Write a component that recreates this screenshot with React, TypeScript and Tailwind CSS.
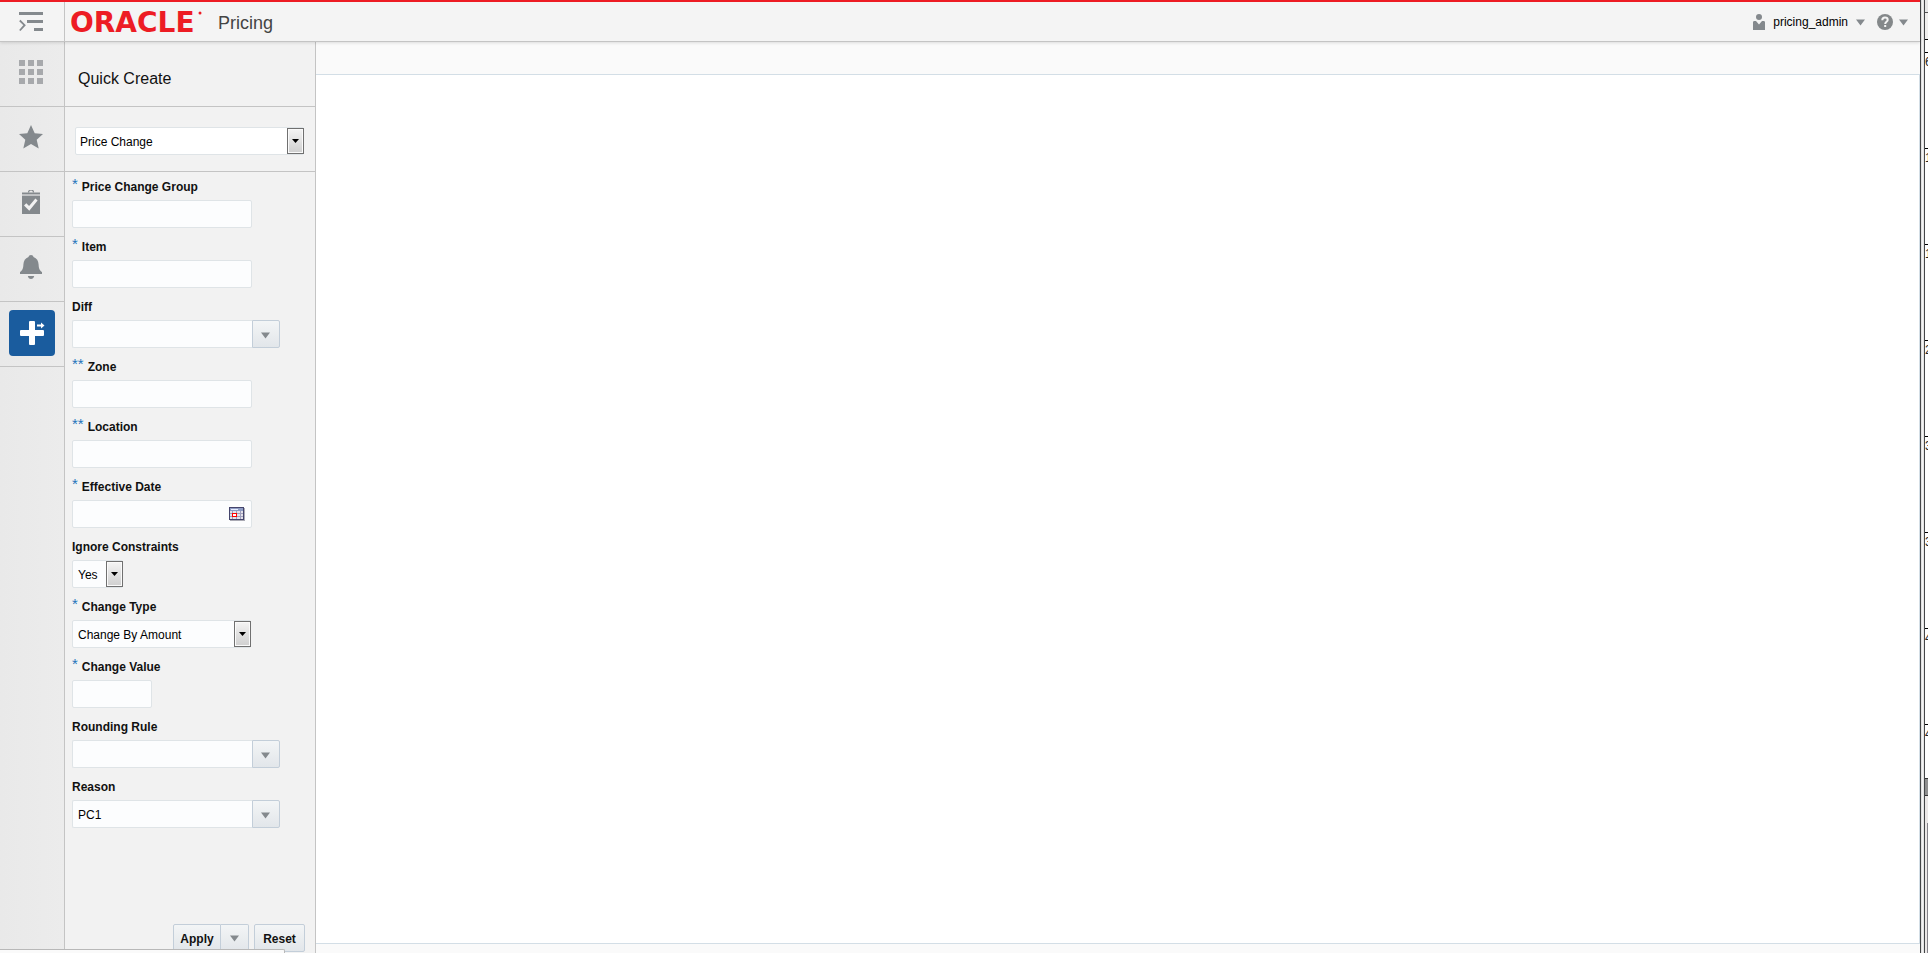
import type { ReactNode } from "react";

const railItems = [
  {
    label: "Tasks",
    icon: (
      <svg width="24" height="24" viewBox="0 0 24 24" fill="#a7a9ac">
        {[0, 9, 18].map((y) => [0, 9, 18].map((x) => <rect key={`${x}-${y}`} x={x} y={y} width="6" height="6" />))}
      </svg>
    ),
  },
  {
    label: "Favorites",
    icon: (
      <svg width="24" height="24" viewBox="0 0 24 24" fill="#84898d">
        <path d="M12 0l3.700 8.200 8.300.8-6.300 5.800 2 8.700L12 19l-7.700 4.500 2-8.700L0 9l8.300-.8z" />
      </svg>
    ),
  },
  {
    label: "Open Tasks",
    icon: (
      <svg width="24" height="24" viewBox="0 0 24 24">
        <path d="M9.500 2.500a2.500 2.500 0 0 1 5 0" fill="none" stroke="#84898d" strokeWidth="1.200" />
        <path d="M3 2.500h18v2H3zM3 6h18v18H3z" fill="#84898d" />
        <path d="M3 4.500h18V6H3z" fill="#c2c4c6" />
        <path d="M5 15.500l2.300-2.200 2.800 2.600 6.300-7.400 2.200 2-8.300 10.300z" fill="#f2f2f2" />
      </svg>
    ),
  },
  {
    label: "Notifications",
    icon: (
      <svg width="24" height="24" viewBox="0 0 24 24" fill="#84898d">
        <path d="M12 0c1.300 0 2.300.8 2.500 1.900 3.300 1.100 4.900 4 5.100 7.600.2 4.300 1 6 3.400 7.600V19H1v-1.900c2.400-1.600 3.200-3.300 3.400-7.600.2-3.600 1.800-6.500 5.100-7.600C9.700.8 10.700 0 12 0zM8.800 21h6.400c-.4 1.800-1.600 3-3.200 3s-2.800-1.200-3.200-3z" />
      </svg>
    ),
  },
  {
    label: "Quick Create",
    active: true,
    icon: (
      <svg width="46" height="46" viewBox="0 0 46 46" fill="#fff">
        <rect x="20" y="11" width="6" height="24" rx="1" />
        <rect x="11" y="20" width="24" height="6" rx="1" />
        <path d="M28 14.500h4V12.500l3.500 3-3.500 3v-2h-4z" />
      </svg>
    ),
  },
];

// marks the rows of the neighbouring window that peeks in on the right
const rulerMarks = ["6", "1", "1", "2", "3", "3", "4", "4"];

function DownArrow() {
  return (
    <svg width="9" height="7" viewBox="0 0 9 7" fill="#84898d" aria-hidden="true">
      <path d="M0 0.500h9L4.500 6.500z" />
    </svg>
  );
}

function SelectBox({ id, label, options, className, wide }: {
  id: string;
  label?: string;
  options: string[];
  className: string;
  wide?: boolean;
}) {
  return (
    <div className={`relative h-7 ${className}`}>
      <select
        id={id}
        aria-label={label}
        className={`h-7 w-full appearance-none rounded-xs border border-[#dfe4e7] pt-px text-[12px] text-black ${wide ? "bg-white pl-1" : "bg-[#fcfdfe] pl-[5px]"}`}
      >
        {options.map((o) => (
          <option key={o}>{o}</option>
        ))}
      </select>
      <span className="pointer-events-none absolute right-0 top-px flex h-[26px] w-[17px] items-center justify-center border border-[#707070] bg-linear-to-b from-[#f4f4f4] to-[#cfcfcf] shadow-[inset_0_0_0_1px_#fafafa]">
        <svg width="7" height="4" viewBox="0 0 7 4" aria-hidden="true">
          <path d="M0 0h7L3.500 4z" />
        </svg>
      </span>
    </div>
  );
}

function Field({ id, label, mark, children }: { id: string; label: string; mark?: string; children: ReactNode }) {
  return (
    <div className="h-[60px]">
      <label htmlFor={id} className="flex h-7 items-center gap-1 pt-0.5 text-[12px] font-bold text-[#111]">
        {mark && <span className="self-start text-[15px] font-normal leading-5 text-[#2474bb]">{mark}</span>}
        {label}
      </label>
      {children}
    </div>
  );
}

function TextBox({ id, className }: { id: string; className: string }) {
  return (
    <input
      id={id}
      type="text"
      className={`block h-7 rounded-xs border border-[#dfe4e7] bg-[#fcfdfe] px-[5px] text-[12px] ${className}`}
    />
  );
}

function ComboBox({ id, name, value }: { id: string; name: string; value?: string }) {
  return (
    <div className="flex">
      <input
        id={id}
        type="text"
        defaultValue={value}
        className="h-7 w-[180px] rounded-l-xs border border-r-0 border-[#dfe4e7] bg-[#fcfdfe] px-[5px] pt-px text-[12px]"
      />
      <button
        type="button"
        aria-label={`Show ${name} list`}
        className="flex h-7 w-7 items-center justify-center rounded-r-xs border border-[#c3ced9] bg-linear-to-b from-[#f3f5f6] to-[#e2e6ea] pr-0.5 pt-0.5"
      >
        <DownArrow />
      </button>
    </div>
  );
}

function Header() {
  return (
    <header className="relative z-10 flex h-[42px] shrink-0 items-stretch border-b border-t-2 border-b-[#c4c4c4] border-t-[#ed1c24] bg-[#f4f4f4] shadow-[0_1px_3px_rgba(0,0,0,0.12)]">
      <button type="button" aria-label="Expand navigation" className="flex w-[65px] items-center justify-center border-r border-[#c4c4c4] pr-0.5">
        <svg width="24" height="20" viewBox="0 0 24 20" fill="#84898d">
          <rect width="24" height="3" />
          <rect x="8" y="8" width="16" height="3" />
          <rect x="15" y="16" width="9" height="3" />
          <path d="M0.800 8.500L5.600 13.200L0.800 18.500" fill="none" stroke="#84898d" strokeWidth="1.800" />
        </svg>
      </button>
      <div className="flex w-[153px] items-center pl-1.5">
        <svg width="142" height="36" viewBox="0 0 142 36" role="img" aria-label="Oracle" fill="#ed1c24">
          <text x="-1" y="28" fontSize="28" className="font-['DejaVu_Sans',sans-serif] font-bold">ORACLE</text>
          <circle cx="129" cy="9" r="1.500" />
        </svg>
      </div>
      <h1 className="self-center pt-[3px] text-[18px] leading-6 text-[#444]">Pricing</h1>
      <div className="ml-auto flex items-center pr-3 pt-px">
        <button type="button" className="flex items-center gap-2 text-[12px] text-black">
          <svg width="12" height="16" viewBox="0 0 12 16" fill="#84898d" aria-hidden="true">
            <circle cx="6" cy="3" r="3" />
            <path d="M0 8.500C0 7.500.500 7 1.500 7H3l3 3.500L9 7h1.500c1 0 1.500.500 1.500 1.500V16H0z" />
          </svg>
          pricing_admin
          <DownArrow />
        </button>
        <button type="button" aria-label="Help" className="ml-3 flex items-center gap-[6px]">
          <svg width="16" height="16" viewBox="0 0 16 16" aria-hidden="true">
            <circle cx="8" cy="8" r="8" fill="#84888a" />
            <path d="M5.300 6.200C5.300 4.500 6.400 3.600 8 3.600s2.700.9 2.700 2.300c0 1.900-2.500 1.900-2.500 4" fill="none" stroke="#f4f4f4" strokeWidth="2" />
            <rect x="7.200" y="11" width="2" height="2" fill="#f4f4f4" />
          </svg>
          <DownArrow />
        </button>
      </div>
    </header>
  );
}

function Rail() {
  return (
    <nav className="w-[65px] shrink-0 border-r border-[#c4c4c4] bg-linear-to-r from-[#e9e9e9] to-[#ececec]">
      {railItems.map((item) => (
        <button
          key={item.label}
          type="button"
          aria-label={item.label}
          className="flex h-[65px] w-full items-center justify-center border-b border-[#c4c4c4] pb-0.5 pr-0.5"
        >
          <span className={item.active ? "ml-0.5 rounded-[4px] bg-[#1a5c9e]" : "pb-0.5"}>{item.icon}</span>
        </button>
      ))}
    </nav>
  );
}

function QuickCreate() {
  const buttonLook = "h-7 border border-[#c3ced9] bg-linear-to-b from-[#f3f5f6] to-[#e2e6ea] pt-px text-[12px] font-bold text-[#111]";

  return (
    <aside className="flex w-[251px] shrink-0 flex-col border-r border-[#c4c4c4] bg-[#f2f2f2]">
      <div className="flex h-[65px] shrink-0 items-center border-b border-[#c4c4c4] pl-[13px] pt-2.5">
        <h2 className="text-[16px] leading-5 text-[#111]">Quick Create</h2>
      </div>
      <div className="flex h-[65px] shrink-0 items-center border-b border-[#c4c4c4] pl-2.5 pt-1">
        <SelectBox id="entity" label="Entity" options={["Price Change", "Clearance"]} className="w-[229px]" wide />
      </div>

      <form className="flex flex-1 flex-col pl-[7px]">
        <Field id="group" label="Price Change Group" mark="*">
          <TextBox id="group" className="w-[180px]" />
        </Field>
        <Field id="item" label="Item" mark="*">
          <TextBox id="item" className="w-[180px]" />
        </Field>
        <Field id="diff" label="Diff">
          <ComboBox id="diff" name="Diff" />
        </Field>
        <Field id="zone" label="Zone" mark="**">
          <TextBox id="zone" className="w-[180px]" />
        </Field>
        <Field id="location" label="Location" mark="**">
          <TextBox id="location" className="w-[180px]" />
        </Field>
        <Field id="date" label="Effective Date" mark="*">
          <div className="relative w-[180px]">
            <TextBox id="date" className="w-full" />
            <button type="button" aria-label="Select Date" className="absolute right-[7px] top-[7px]">
              <svg width="16" height="14" viewBox="0 0 16 14">
                <rect x="1" y="1" width="15" height="13" fill="#aaaab4" />
                <rect width="15" height="13" fill="#44446c" />
                <rect x="1" y="1" width="13" height="11" fill="#e4e2ea" />
                <rect x="1" y="1" width="13" height="3" fill="#8e9cc4" />
                <rect x="2" y="2" width="7" height="1" fill="#e8ecff" />
                <path d="M3.500 4v8M7.500 4v8M11.500 4v8M1 6.500h13M1 9.500h13" stroke="#a0a0bc" />
                <rect x="3.500" y="6.500" width="4" height="3" fill="#fff" stroke="#f00" />
              </svg>
            </button>
          </div>
        </Field>
        <Field id="ignore" label="Ignore Constraints">
          <SelectBox id="ignore" options={["Yes", "No"]} className="w-[51px]" />
        </Field>
        <Field id="type" label="Change Type" mark="*">
          <SelectBox id="type" options={["Change By Amount", "Change By Percent", "Fixed Price"]} className="w-[179px]" />
        </Field>
        <Field id="value" label="Change Value" mark="*">
          <TextBox id="value" className="w-20" />
        </Field>
        <Field id="rounding" label="Rounding Rule">
          <ComboBox id="rounding" name="Rounding Rule" />
        </Field>
        <Field id="reason" label="Reason">
          <ComboBox id="reason" name="Reason" value="PC1" />
        </Field>

        <div className="mt-auto flex justify-end pb-px pr-[10px]">
          <button type="button" className={`w-12 rounded-l-xs ${buttonLook}`}>Apply</button>
          <button
            type="button"
            aria-label="More apply actions"
            className={`mr-[5px] flex w-7 items-center justify-center rounded-r-xs border-l-0 ${buttonLook}`}
          >
            <DownArrow />
          </button>
          <button type="reset" className={`w-[51px] rounded-xs ${buttonLook}`}>Reset</button>
        </div>
      </form>
    </aside>
  );
}

function WindowEdge() {
  return (
    <div className="flex w-2 shrink-0">
      <div className="w-[5px] shrink-0 border-x border-[#444648] bg-linear-to-r from-[#d8d8d8] via-[#f4f4f4] to-[#dcdcdc]" />
      <div className="flex w-[3px] flex-col overflow-hidden bg-white">
        <div className="h-[13px] shrink-0 border-b border-[#555] bg-[#e8e8e8]" />
        <div className="h-[26px] shrink-0 bg-[#f0efee]" />
        <div className="h-[13px] shrink-0 border-t border-black" />
        {rulerMarks.map((mark, i) => (
          <div
            key={i}
            className={`shrink-0 border-t border-black pt-[3px] text-[12px] leading-3 text-[#222] ${i === rulerMarks.length - 1 ? "h-[54px]" : "h-24"}`}
          >
            {mark}
          </div>
        ))}
        <div className="h-[18px] shrink-0 border-y border-[#333] bg-[#8f8f8f]" />
        <div className="flex-1 bg-[#ebe8e7] pl-0.5 pt-[27px]">
          <div className="h-full bg-[#85838a]" />
        </div>
      </div>
    </div>
  );
}

export default function App() {
  return (
    <div className="flex h-screen min-h-[900px] overflow-hidden bg-white font-['Liberation_Sans',Arial,sans-serif]">
      <div className="relative flex min-w-0 flex-1 flex-col">
        <Header />
        <div className="flex min-h-0 flex-1">
          <Rail />
          <QuickCreate />
          <main className="flex min-w-0 flex-1 flex-col bg-[#fafafa]">
            <div className="h-8 shrink-0" />
            <div className="flex-1 border-y border-r border-[#d3dee6] bg-white" />
            <div className="h-[9px] shrink-0" />
          </main>
        </div>
        {/* browser status bubble */}
        <div className="absolute bottom-0 left-0 z-10 h-1 w-[285px] rounded-tr-xs border-r border-t border-[#b8b8b8] bg-[#fafafa]" />
      </div>
      <WindowEdge />
    </div>
  );
}
